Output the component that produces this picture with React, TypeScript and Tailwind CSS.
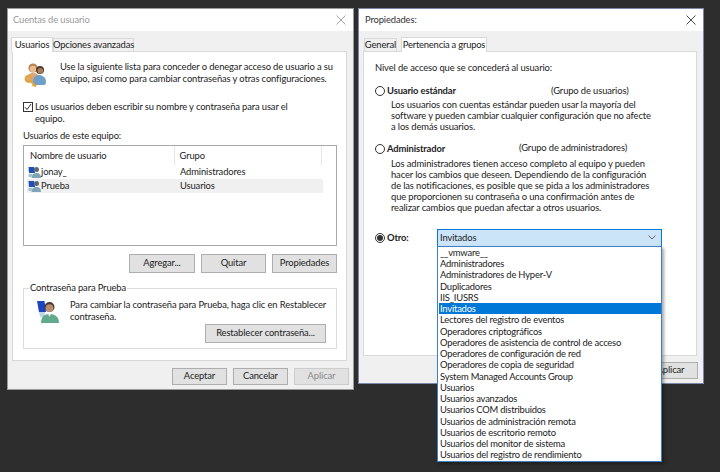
import type { ReactNode } from "react";

const GROUPS = [
  "__vmware__",
  "Administradores",
  "Administradores de Hyper-V",
  "Duplicadores",
  "IIS_IUSRS",
  "Invitados",
  "Lectores del registro de eventos",
  "Operadores criptográficos",
  "Operadores de asistencia de control de acceso",
  "Operadores de configuración de red",
  "Operadores de copia de seguridad",
  "System Managed Accounts Group",
  "Usuarios",
  "Usuarios avanzados",
  "Usuarios COM distribuidos",
  "Usuarios de administración remota",
  "Usuarios de escritorio remoto",
  "Usuarios del monitor de sistema",
  "Usuarios del registro de rendimiento",
];

function CloseIcon({ className }: { className: string }) {
  return (
    <svg width="10" height="10" viewBox="0 0 10 10" className={className}>
      <path d="M0.5 0.5 9.5 9.5M9.5 0.5 0.5 9.5" fill="none" stroke="currentColor" strokeWidth="0.9" />
    </svg>
  );
}

function Btn({ className, children }: { className: string; children: ReactNode }) {
  return (
    <div className={`flex items-center justify-center border border-[#adadad] bg-[#e1e1e1] ${className}`}>
      {children}
    </div>
  );
}

function Radio({ checked }: { checked?: boolean }) {
  return (
    <span className="flex h-[10px] w-[10px] shrink-0 items-center justify-center rounded-full border border-[#333] bg-white">
      {checked ? <span className="h-[6px] w-[6px] rounded-full bg-[#333]" /> : null}
    </span>
  );
}

function UsersKeyIcon() {
  return (
    <svg width="24" height="26" viewBox="0 0 24 26">
      <circle cx="9" cy="6" r="4.6" fill="#b9824f" />
      <circle cx="9" cy="7" r="3.3" fill="#e6bd94" />
      <path d="M2 19c0-6 3-8 7-8s6 2 6 6v3H2z" fill="#d9a877" />
      <path d="M9 20c0-5 3-7 6-7s7 2 7 7c0 2-1 3-2 3h-9c-1 0-2-1-2-3z" fill="#6f9fc9" />
      <circle cx="16" cy="8" r="4" fill="#4d3a2c" />
      <circle cx="16.3" cy="8.8" r="2.8" fill="#a97c5c" />
      <circle cx="4.5" cy="17" r="3" fill="none" stroke="#e3a43a" strokeWidth="1.8" />
      <path d="M6.5 19 12 24.5M10 22.5l-1.5 1.5" fill="none" stroke="#e3a43a" strokeWidth="2" />
    </svg>
  );
}

function RowUserIcon() {
  return (
    <svg width="13" height="13" viewBox="0 0 13 13" className="shrink-0">
      <path d="M0.5 1h5.5l1 6h-6z" fill="#1f4fb8" />
      <circle cx="8.5" cy="3.6" r="2.5" fill="#5b6a74" />
      <path d="M3.5 12c0-3.5 2-5 5-5s4.5 1.5 4.5 5z" fill="#7fa6b8" />
      <path d="M0.5 8h4l-1 3h-3z" fill="#9fc0d8" />
    </svg>
  );
}

function ResetIcon() {
  return (
    <svg width="24" height="24" viewBox="0 0 24 24">
      <path d="M1 1h7.5l1.5 11H3z" fill="#1c44c0" />
      <path d="M3 12h6l-1 5H4z" fill="#bcd6e6" />
      <circle cx="13.5" cy="7" r="5" fill="#4a3a30" />
      <circle cx="13.5" cy="8.2" r="3.9" fill="#b98d70" />
      <path d="M5 23c0-6 3-9 8.5-9S23 17 23 23z" fill="#63a98d" />
      <path d="M12 14h3l-1.5 3z" fill="#e8eee9" />
    </svg>
  );
}

function LeftWindow() {
  return (
    <div className="h-[382px] w-[347px] shrink-0 border border-[#9a9a9a] bg-[#f0f0f0]">
      <div className="flex h-[22px] items-center justify-between bg-white pl-[5px] pr-[7px] text-[#999]">
        <span>Cuentas de usuario</span>
        <CloseIcon className="text-[#9a9a9a]" />
      </div>
      <div className="flex h-[20px] items-end whitespace-nowrap pl-[3px]">
        <div className="relative z-10 -mb-px flex h-[15px] w-[42px] items-center justify-center border border-b-0 border-[#d9d9d9] bg-white">
          Usuarios
        </div>
        <div className="flex h-[13px] w-[81px] items-center justify-center border border-b-0 border-[#d9d9d9] bg-[#f0f0f0]">
          Opciones avanzadas
        </div>
      </div>
      <div className="ml-[4px] mr-[6px] h-[310px] border border-[#d9d9d9] bg-white pl-[10px] pr-[9px] pt-[10px]">
        <div className="flex h-[26px]">
          <div className="w-[37px] shrink-0 pl-px">
            <UsersKeyIcon />
          </div>
          <p className="-mt-[1px] whitespace-nowrap leading-[11.5px]">
            Use la siguiente lista para conceder o denegar acceso de usuario a su
            <br />
            equipo, así como para cambiar contraseñas y otras configuraciones.
          </p>
        </div>
        <div className="mt-[13px] flex h-[24px]">
          <span className="mt-px flex h-[10px] w-[10px] shrink-0 items-center justify-center border border-[#333] bg-white">
            <svg width="8" height="8" viewBox="0 0 8 8">
              <path d="M1 4.2 3 6.5 7 1" fill="none" stroke="#333" strokeWidth="1" />
            </svg>
          </span>
          <p className="ml-[2px] whitespace-nowrap leading-[11.5px]">
            Los usuarios deben escribir su nombre y contraseña para usar el
            <br />
            equipo.
          </p>
        </div>
        <p className="mt-[5px] h-[12px] leading-[12px]">Usuarios de este equipo:</p>
        <div className="mt-[3px] h-[101px] border border-[#a9a9a9] pl-[3px] pr-[14px]">
          <div className="flex h-[19px] items-center">
            <div className="h-full w-[147px] pl-[3px] leading-[19px]">Nombre de usuario</div>
            <div className="h-full w-[149px] border-x border-[#e5e5e5] pl-[5px] leading-[19px]">Grupo</div>
          </div>
          <div className="flex h-[14px] items-center">
            <div className="flex w-[147px] items-center pl-[1px]">
              <RowUserIcon />
              <span>jonay_</span>
            </div>
            <div className="pl-[6px]">Administradores</div>
          </div>
          <div className="flex h-[14px] w-[296px] items-center bg-[#f0f0f0]">
            <div className="flex w-[147px] items-center pl-[1px]">
              <RowUserIcon />
              <span>Prueba</span>
            </div>
            <div className="pl-[6px]">Usuarios</div>
          </div>
        </div>
        <div className="mt-[8px] flex h-[19px] justify-end gap-[6px]">
          <Btn className="w-[66px]">Agregar...</Btn>
          <Btn className="w-[65px]">Quitar</Btn>
          <Btn className="w-[65px]">Propiedades</Btn>
        </div>
        <div className="relative mt-[15px] h-[61px] border border-[#dcdcdc] pl-[12px] pt-[11px]">
          <span className="absolute -top-[7px] left-[5px] bg-white px-px leading-[12px]">Contraseña para Prueba</span>
          <div className="flex">
            <div className="w-[34px] shrink-0">
              <ResetIcon />
            </div>
            <p className="-mt-[1px] whitespace-nowrap leading-[11.5px]">
              Para cambiar la contraseña para Prueba, haga clic en Restablecer
              <br />
              contraseña.
            </p>
          </div>
          <Btn className="absolute bottom-[5px] right-[10px] h-[19px] w-[121px]">Restablecer contraseña...</Btn>
        </div>
      </div>
      <div className="flex justify-end gap-[6px] pr-[4px] pt-[7px]">
        <Btn className="h-[17px] w-[55px]">Aceptar</Btn>
        <Btn className="h-[17px] w-[55px]">Cancelar</Btn>
        <Btn className="h-[17px] w-[55px] border-[#cccccc] bg-[#cccccc] text-[#8a8a8a]">Aplicar</Btn>
      </div>
    </div>
  );
}

function RightWindow() {
  return (
    <div className="relative h-[376px] w-[346px] shrink-0 border border-[#7d86a8] bg-[#f0f0f0]">
      <div className="flex h-[22px] items-center justify-between bg-white pl-[6px] pr-[7px] text-[#333]">
        <span>Propiedades:</span>
        <CloseIcon className="text-[#333]" />
      </div>
      <div className="flex h-[20px] items-end whitespace-nowrap pl-[5px]">
        <div className="flex h-[13px] w-[33px] items-center justify-center border border-b-0 border-[#d9d9d9]">
          General
        </div>
        <div className="relative z-10 -mb-px ml-[4px] flex h-[15px] w-[86px] items-center justify-center border border-b-0 border-[#d9d9d9] bg-white tracking-[-0.2px]">
          Pertenencia a grupos
        </div>
      </div>
      <div className="ml-[4px] mr-[6px] h-[305px] border border-[#d9d9d9] bg-white pl-[11px] pt-[10px]">
        <p className="h-[12px] leading-[12px]">Nivel de acceso que se concederá al usuario:</p>
        <div className="mt-[11px] flex h-[12px] items-center">
          <Radio />
          <span className="ml-[2px] w-[164px] font-bold leading-[12px]">Usuario estándar</span>
          <span className="leading-[12px]">(Grupo de usuarios)</span>
        </div>
        <p className="mt-[2px] whitespace-nowrap pl-[16px] leading-[11.2px]">
          Los usuarios con cuentas estándar pueden usar la mayoría del
          <br />
          software y pueden cambiar cualquier configuración que no afecte
          <br />a los demás usuarios.
        </p>
        <div className="mt-[10px] flex h-[12px] items-center">
          <Radio />
          <span className="ml-[2px] w-[132px] font-bold leading-[12px]">Administrador</span>
          <span className="-mt-[2px] leading-[12px]">(Grupo de administradores)</span>
        </div>
        <p className="mt-[3px] whitespace-nowrap pl-[16px] leading-[11.2px]">
          Los administradores tienen acceso completo al equipo y pueden
          <br />
          hacer los cambios que deseen. Dependiendo de la configuración
          <br />
          de las notificaciones, es posible que se pida a los administradores
          <br />
          que proporcionen su contraseña o una confirmación antes de
          <br />
          realizar cambios que puedan afectar a otros usuarios.
        </p>
        <div className="mt-[15px] flex h-[18px] items-center">
          <Radio checked />
          <span className="ml-[2px] w-[50px] font-bold">Otro:</span>
          <div className="flex h-[18px] w-[225px] items-center justify-between border border-[#0078d7] bg-[#cce4f7] pl-[2px] pr-[5px]">
            <span>Invitados</span>
            <svg width="8" height="5" viewBox="0 0 8 5">
              <path d="M0.5 0.5 4 4l3.5-3.5" fill="none" stroke="#555" strokeWidth="0.9" />
            </svg>
          </div>
        </div>
      </div>
      <div className="flex justify-end pr-[5px] pt-[6px]">
        <Btn className="h-[17px] w-[55px]">Aplicar</Btn>
      </div>
      {/* open combobox list, hangs out of the window */}
      <div className="absolute left-[78px] top-[237px] z-20 h-[216px] w-[225px] border border-[#3f80c4] bg-white pl-[1px] tracking-[-0.2px] shadow-[2px_2px_3px_rgba(0,0,0,0.35)]">
        {GROUPS.map((g) => (
          <div
            key={g}
            className={`h-[11.24px] pl-[1px] leading-[11.24px] ${g === "Invitados" ? "bg-[#0078d7] text-white" : ""}`}
          >
            {g}
          </div>
        ))}
      </div>
    </div>
  );
}

export default function App() {
  return (
    <div className="h-[472px] w-[720px] overflow-hidden bg-[#2d2d2d] pl-[7px] pt-[8px] font-['Lato','Noto_Sans',sans-serif] text-[9.4px] tracking-[-0.12px] text-[#222]">
      <div className="flex items-start gap-[4px]">
        <LeftWindow />
        <RightWindow />
      </div>
    </div>
  );
}
